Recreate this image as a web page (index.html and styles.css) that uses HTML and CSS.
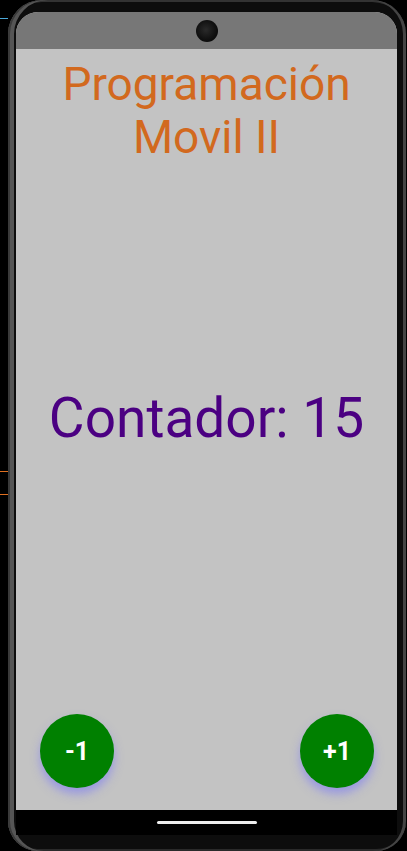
FILE: index.html
```html
<!DOCTYPE html>
<html lang="es">
<head>
<meta charset="utf-8">
<title>Contador</title>
<link rel="stylesheet" href="styles.css">
</head>
<body>
<div class="mark mark-blue"></div>
<div class="mark mark-orange1"></div>
<div class="mark mark-orange2"></div>
<div class="phone">
  <div class="screen">
    <div class="statusbar"><span class="camera"></span></div>
    <main class="app">
      <h1 class="title">Programación<br>Movil II</h1>
      <p class="counter">Contador: 15</p>
      <div class="actions">
        <button class="fab">-1</button>
        <button class="fab">+1</button>
      </div>
    </main>
    <div class="navbar"><span class="pill"></span></div>
  </div>
</div>
</body>
</html>
```
FILE: styles.css
```css
html, body {
  margin: 0;
  padding: 0;
  background: #000;
  width: 407px;
  height: 851px;
  overflow: hidden;
  font-family: Roboto, "Noto Sans", sans-serif;
}
.mark {
  position: absolute;
  left: 0;
  width: 8px;
  height: 1px;
}
.mark-blue { top: 18px; background: #4aa8d8; }
.mark-orange1 { top: 471px; background: #e07020; }
.mark-orange2 { top: 494px; background: #e07020; }
.phone {
  margin-left: 8px;
  width: 398px;
  height: 851px;
  box-sizing: border-box;
  padding: 12px 9px 16px 8px;
  border-radius: 34px 34px 30px 30px;
  background: #0d0d0d;
  box-shadow: inset 2px 0 0 #3a3a3a, inset 6px 0 0 #555, inset -3px 0 0 #444, inset 0 2px 0 #333, inset 0 -2px 0 #2a2a2a;
}
.screen {
  height: 100%;
  display: flex;
  flex-direction: column;
  border-radius: 22px 22px 0 0;
  overflow: hidden;
  background: #c3c3c3;
}
.statusbar {
  height: 37px;
  flex: none;
  background: #777;
  display: flex;
  justify-content: center;
  align-items: center;
}
.camera {
  width: 22px;
  height: 22px;
  border-radius: 50%;
  background: radial-gradient(circle at 45% 45%, #2a2a2a 0, #111 55%, #000 100%);
  margin-left: 1px;
  margin-top: 1px;
}
.app {
  flex: 1;
  display: flex;
  flex-direction: column;
  align-items: center;
  padding: 9px 0 22px;
}
.title {
  margin: 0;
  font-weight: 400;
  font-size: 46px;
  line-height: 53px;
  color: #d2691e;
  text-align: center;
}
.counter {
  margin: 222px 0 0;
  font-size: 55px;
  line-height: 64px;
  color: #4b0082;
}
.actions {
  margin-top: auto;
  align-self: stretch;
  display: flex;
  justify-content: space-between;
  padding: 0 23px 0 24px;
}
.fab {
  width: 74px;
  height: 74px;
  border: none;
  border-radius: 50%;
  background: #008000;
  color: #fff;
  font-family: Roboto, "Noto Sans", sans-serif;
  font-weight: 700;
  font-size: 25px;
  padding: 0;
  box-shadow: 0 6px 10px rgba(110, 110, 255, 0.5);
}
.navbar {
  height: 25px;
  flex: none;
  background: #000;
  display: flex;
  justify-content: center;
  align-items: center;
}
.pill {
  width: 100px;
  height: 3px;
  border-radius: 2px;
  background: #eee;
  margin-left: 1px;
}
```
